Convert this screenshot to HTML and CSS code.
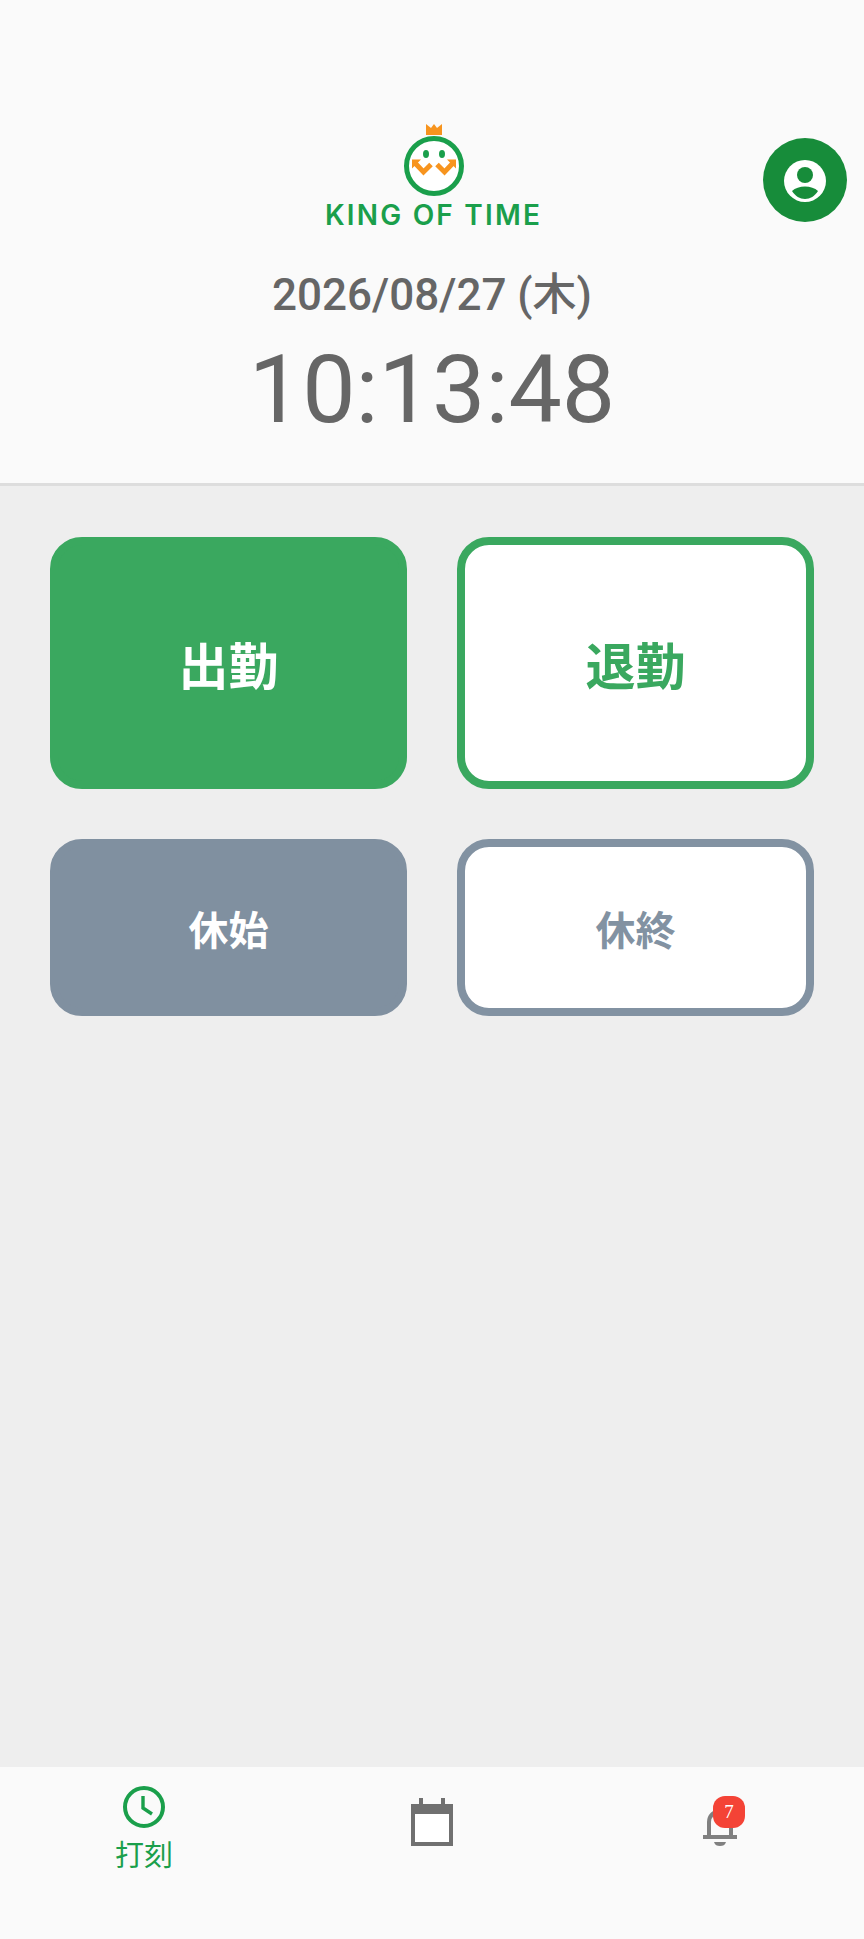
FILE: index.html
```html
<!DOCTYPE html>
<html lang="ja">
<head>
    <meta charset="UTF-8">
    <meta name="viewport" content="width=device-width, initial-scale=1.0">
    <title>KING OF TIME</title>
    <link rel="stylesheet" href="styles.css">
</head>
<body>
    <div class="app">
        <header class="header">
            <div class="logo">
                <svg class="logo-mark" width="64" height="74" viewBox="0 0 64 74">
                    <path d="M24 11V0l5 4 3-4 3 4 5-4v11z" fill="#f7941e"/>
                    <circle cx="32" cy="42" r="27.5" fill="#fff" stroke="#1a9f4b" stroke-width="5"/>
                    <ellipse cx="24" cy="30" rx="3" ry="4" fill="#1a9f4b"/>
                    <ellipse cx="40" cy="30" rx="3" ry="4" fill="#1a9f4b"/>
                    <path d="M12.500 38.500l9 9.500 7.500-7.500M51.500 38.500L42.500 48 35 40.500" fill="none" stroke="#f7941e" stroke-width="5"/>
                    <path d="M10 35.500h9l-9 9zM54 35.500h-9l9 9z" fill="#f7941e"/>
                </svg>
                <div class="logo-text">KING OF TIME</div>
            </div>
            <div class="date">2026/08/27 (木)</div>
            <div class="time">10:13:48</div>
            <button class="account-btn">
                <svg width="44" height="44" viewBox="0 0 44 44">
                    <circle cx="22" cy="22" r="21" fill="#fff"/>
                    <circle cx="22" cy="16" r="8" fill="#178c3a"/>
                    <path d="M9 32c3-3 8-4.500 13-4.500s10 1.500 13 4.500c-3 5-8 8-13 8s-10-3-13-8z" fill="#178c3a"/>
                </svg>
            </button>
        </header>

        <main class="punch-grid">
            <button class="punch-btn punch-main in-solid">出勤</button>
            <button class="punch-btn punch-main in-outline">退勤</button>
            <button class="punch-btn punch-sub break-solid">休始</button>
            <button class="punch-btn punch-sub break-outline">休終</button>
        </main>

        <nav class="tabbar">
            <div class="tab active">
                <svg width="44" height="44" viewBox="0 0 44 44">
                    <circle cx="22" cy="22" r="19" fill="none" stroke="#1a9f4b" stroke-width="4"/>
                    <path d="M21 11v12l9 6" fill="none" stroke="#1a9f4b" stroke-width="3.400"/>
                </svg>
                <span class="tab-label">打刻</span>
            </div>
            <div class="tab">
                <svg class="tab-calendar" width="44" height="48" viewBox="0 0 44 48">
                    <path d="M9 0h4v6h18V0h4v6h8v42H1V6h8z" fill="#707070"/>
                    <path d="M5 16h34v28H5z" fill="#fff"/>
                </svg>
            </div>
            <div class="tab">
                <div class="bell">
                    <svg width="36" height="40" viewBox="0 0 36 40">
                        <path d="M7 29V15a11 11 0 0 1 22 0v14" fill="none" stroke="#808080" stroke-width="4"/>
                        <path d="M1 28h34v4H1zM12 35h12c-1 3-3 4-6 4s-5-1-6-4z" fill="#808080"/>
                    </svg>
                    <span class="badge">7</span>
                </div>
            </div>
        </nav>
    </div>
</body>
</html>
```

FILE: styles.css
```css
body {
    margin: 0;
    font-family: Roboto, "Noto Sans CJK JP", sans-serif;
    color: #666;
    background-color: #eee;
}

.app {
    display: flex;
    flex-direction: column;
    height: 1939px;
}

.header {
    position: relative;
    display: flex;
    flex-direction: column;
    align-items: center;
    height: 359px;
    padding-top: 124px;
    background-color: #fafafa;
    border-bottom: 3px solid #ddd;
}

.logo {
    display: flex;
    flex-direction: column;
    align-items: center;
    margin-left: 3px;
}

.logo-mark {
    display: block;
}

.logo-text {
    margin-top: 3px;
    font-family: Inter, sans-serif;
    font-size: 28px;
    line-height: 28px;
    font-weight: 600;
    letter-spacing: 2.2px;
    white-space: nowrap;
    color: #1a9f4b;
}

.date {
    margin-top: 40px;
    font-size: 44px;
    font-weight: 500;
    line-height: 52px;
}

.time {
    margin-top: 13px;
    font-size: 95px;
    line-height: 112px;
}

.account-btn {
    position: absolute;
    top: 138px;
    right: 17px;
    display: flex;
    align-items: center;
    justify-content: center;
    width: 84px;
    height: 84px;
    padding: 2px 0 0;
    border: none;
    border-radius: 50%;
    background-color: #178c3a;
}

.punch-grid {
    flex: 1;
    display: grid;
    grid-template-columns: 357px 357px;
    grid-template-rows: 252px 177px;
    gap: 50px;
    padding: 51px 50px 0;
    align-content: start;
}

.punch-btn {
    font-family: "Noto Sans CJK JP", sans-serif;
    font-weight: 700;
    border-radius: 32px;
    padding: 0;
    border: 8px solid transparent;
}

.punch-main {
    font-size: 50px;
}

.punch-sub {
    font-size: 40px;
}

.in-solid {
    background-color: #3aa85f;
    border-color: #3aa85f;
    color: #fff;
}

.in-outline {
    background-color: #fff;
    border-color: #3aa85f;
    color: #3aa85f;
}

.break-solid {
    background-color: #8090a0;
    border-color: #8090a0;
    color: #fff;
}

.break-outline {
    background-color: #fff;
    border-color: #8292a2;
    color: #8292a2;
}

.tabbar {
    display: grid;
    grid-template-columns: repeat(3, 1fr);
    height: 172px;
    background-color: #fafafa;
}

.tab {
    display: flex;
    flex-direction: column;
    align-items: center;
    padding-top: 18px;
}

.tab-label {
    margin-top: 8px;
    font-family: "Noto Sans CJK JP", sans-serif;
    font-size: 29px;
    line-height: 32px;
    color: #1a9f4b;
}

.tab-calendar {
    margin-top: 13px;
}

.bell {
    position: relative;
    margin-top: 22px;
}

.bell svg {
    display: block;
}

.badge {
    position: absolute;
    top: -11px;
    left: 11px;
    width: 32px;
    height: 32px;
    border-radius: 12px;
    background-color: #f44336;
    color: #fff;
    font-family: "Liberation Serif", serif;
    font-size: 19px;
    line-height: 32px;
    text-align: center;
}
```
